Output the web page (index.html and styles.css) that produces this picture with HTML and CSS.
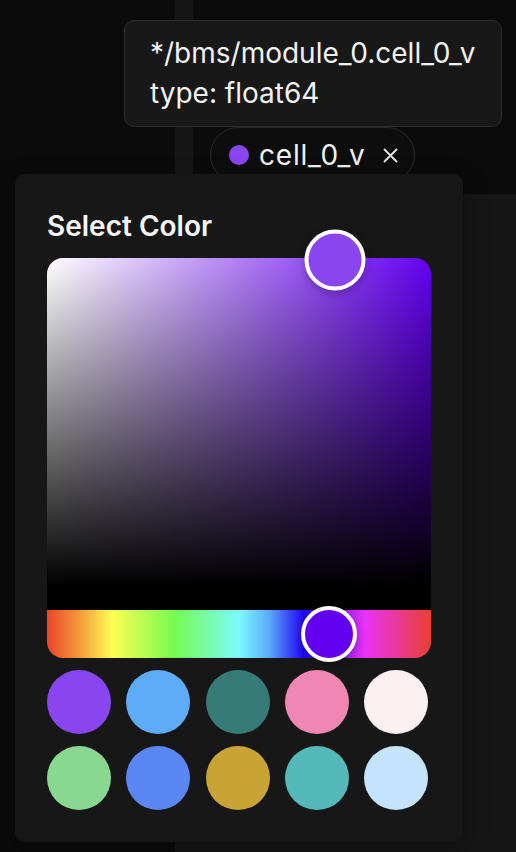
FILE: index.html
```html
<!DOCTYPE html>
<html lang="en">
<head>
    <meta charset="UTF-8">
    <meta name="viewport" content="width=device-width, initial-scale=1.0">
    <title>Signal Color</title>
    <link rel="stylesheet" href="styles.css">
</head>
<body>
<div class="app">
    <aside class="sidebar"></aside>
    <main class="main">
        <div class="toolbar">
            <div class="chip">
                <span class="chip-dot"></span>
                <span class="chip-label">cell_0_v</span>
                <svg class="chip-close" width="15" height="15" viewBox="0 0 15 15">
                    <path d="M1.5 1.5 L13.5 13.5 M13.5 1.5 L1.5 13.5" stroke="#e6e6e6" stroke-width="1.8" stroke-linecap="round" fill="none"/>
                </svg>
            </div>
        </div>
        <div class="panel"></div>
    </main>
</div>

<div class="tooltip">
    <div>*/bms/module_0.cell_0_v</div>
    <div>type: float64</div>
</div>

<section class="popover">
    <h2 class="popover-title">Select Color</h2>
    <div class="picker">
        <div class="saturation">
            <span class="pointer pointer-sat"></span>
        </div>
        <div class="hue">
            <span class="pointer pointer-hue"></span>
        </div>
    </div>
    <div class="swatches">
        <button class="swatch" style="background:#8845f0"></button>
        <button class="swatch" style="background:#5eacf8"></button>
        <button class="swatch" style="background:#377b79"></button>
        <button class="swatch" style="background:#f086b4"></button>
        <button class="swatch" style="background:#fcf0f0"></button>
        <button class="swatch" style="background:#88d891"></button>
        <button class="swatch" style="background:#5b87f5"></button>
        <button class="swatch" style="background:#c9a434"></button>
        <button class="swatch" style="background:#56b9b9"></button>
        <button class="swatch" style="background:#c5e3fc"></button>
    </div>
</section>
</body>
</html>
```

FILE: styles.css
```css
* {
    box-sizing: border-box;
}
body {
    margin: 0;
    background-color: #0b0b0b;
    color: #f2f2f2;
    font-family: "Inter", "Noto Sans", sans-serif;
    overflow: hidden;
}
.app {
    display: grid;
    grid-template-columns: 175px 1fr;
    height: 100vh;
}
.sidebar {
    background-color: #0b0b0b;
}
.main {
    display: flex;
    flex-direction: column;
    background-color: #161616;
}
.toolbar {
    height: 194px;
    margin-left: 18px;
    padding: 127px 0 0 17px;
    background-color: #0b0b0b;
}
.panel {
    flex: 1;
}
.chip {
    display: inline-flex;
    align-items: center;
    height: 56px;
    padding: 0 16px 0 18px;
    border: 1px solid #2a2a2a;
    border-radius: 28px;
    background-color: #0d0d0d;
    font-size: 28px;
    line-height: 40px;
}
.chip-dot {
    width: 20px;
    height: 20px;
    border-radius: 50%;
    background-color: #8845f0;
    margin-right: 10px;
}
.chip-label {
    letter-spacing: 0.8px;
}
.chip-close {
    margin-left: 18px;
}
.tooltip {
    position: absolute;
    left: 124px;
    top: 20px;
    padding: 12px 26px 13px 25px;
    border: 1px solid #2c2c2c;
    border-radius: 10px;
    background-color: #181818;
    font-size: 28px;
    line-height: 40px;
    white-space: nowrap;
}
.popover {
    position: absolute;
    left: 15px;
    top: 174px;
    width: 448px;
    padding: 32px;
    border-radius: 10px;
    background-color: #171717;
    box-shadow: 0 8px 24px rgba(0, 0, 0, 0.35);
}
.popover-title {
    margin: 0 0 12px;
    font-size: 28px;
    line-height: 40px;
    font-weight: 600;
    color: #f5f5f5;
}
.picker {
    display: flex;
    flex-direction: column;
}
.saturation {
    position: relative;
    height: 352px;
    border-bottom: 24px solid #000;
    border-radius: 16px 16px 0 0;
    background-color: #6400f0;
    background-image:
        linear-gradient(to top, #000, rgba(0, 0, 0, 0)),
        linear-gradient(to right, #fff, rgba(255, 255, 255, 0));
}
.hue {
    position: relative;
    height: 48px;
    border-radius: 0 0 16px 16px;
    background: linear-gradient(to right,
        #e9442a 0%,
        #f5a03c 9%,
        #fdfd55 17%,
        #77fb4f 33%,
        #7cfbfd 50%,
        #5aa8f8 58%,
        #2000f5 67%,
        #ea33f7 83%,
        #e9402f 100%);
}
.pointer {
    position: absolute;
    border: 4px solid #fff;
    border-radius: 50%;
    transform: translate(-50%, -50%);
    box-shadow: 0 3px 8px rgba(0, 0, 0, 0.25);
}
.pointer-sat {
    left: 75%;
    top: 2px;
    width: 61px;
    height: 61px;
    background-color: #8845f0;
}
.pointer-hue {
    left: 73.4%;
    top: 50%;
    width: 56px;
    height: 56px;
    background-color: #6400f2;
}
.swatches {
    display: grid;
    grid-template-columns: repeat(5, 64px);
    gap: 12px 15.25px;
    margin-top: 12px;
}
.swatch {
    width: 64px;
    height: 64px;
    padding: 0;
    border: none;
    border-radius: 50%;
    cursor: pointer;
}
```
